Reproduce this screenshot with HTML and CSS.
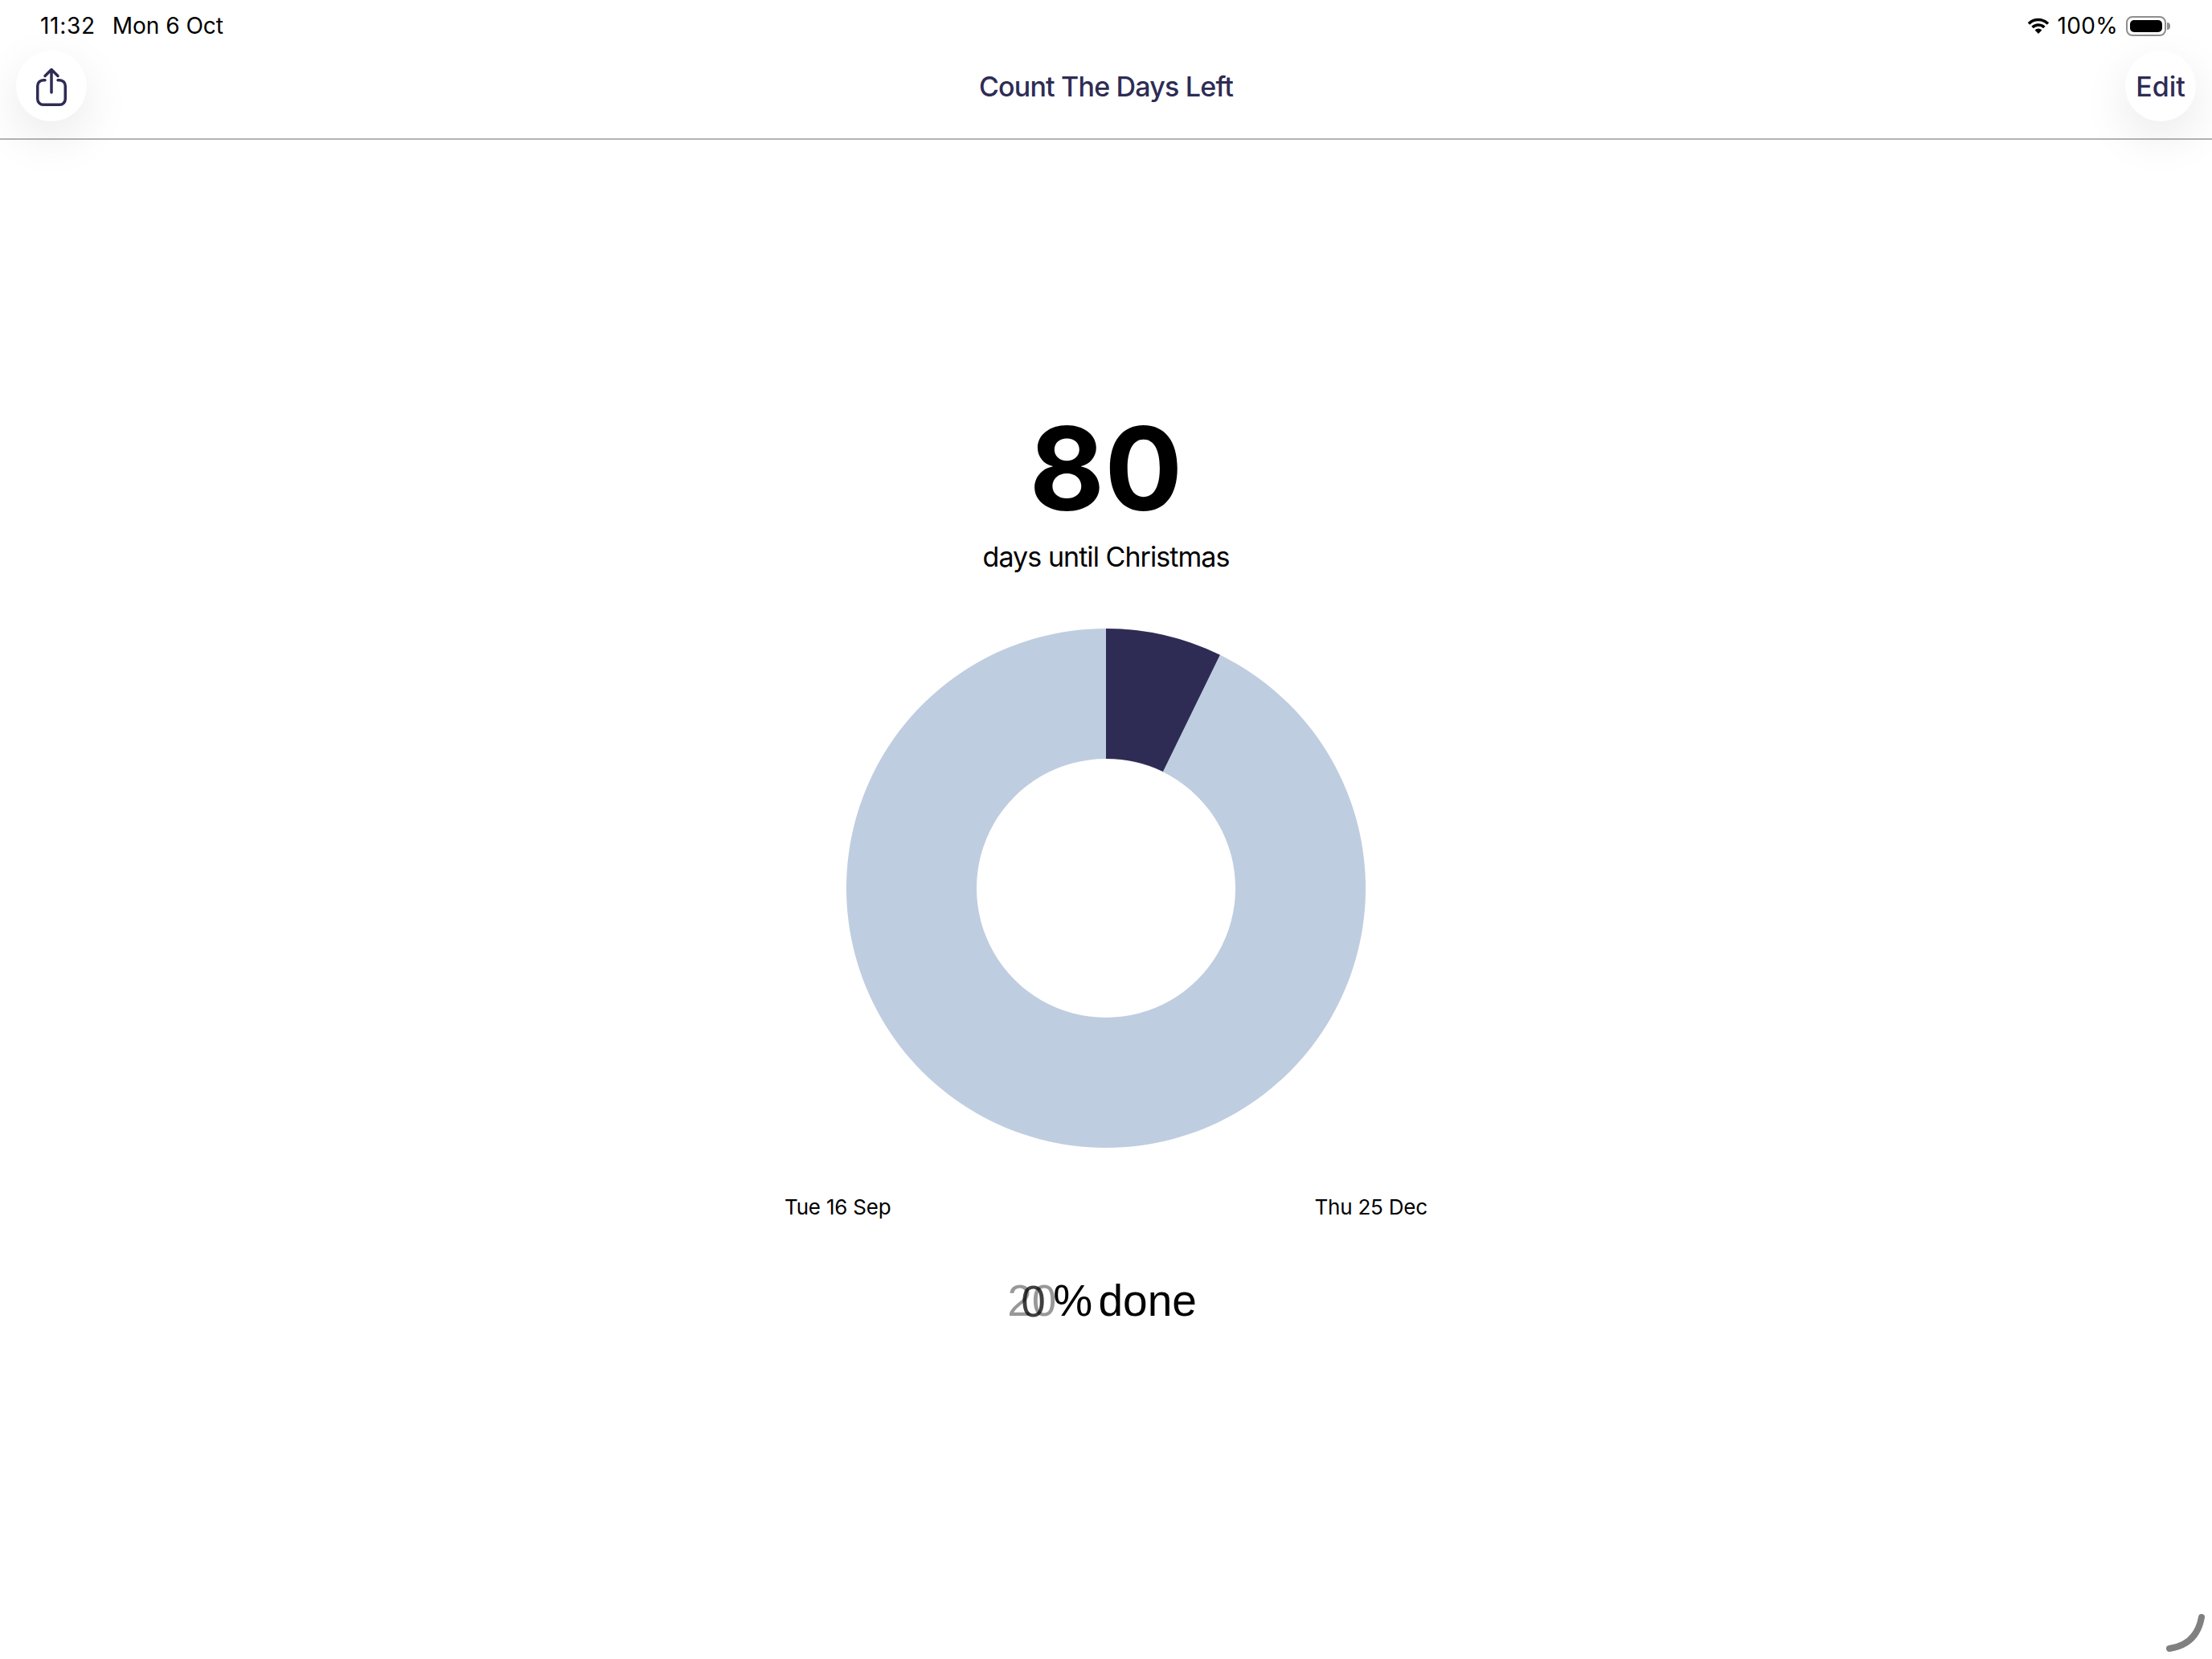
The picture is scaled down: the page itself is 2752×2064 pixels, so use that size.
FILE: index.html
```html
<!DOCTYPE html>
<html lang="en">
<head>
  <meta charset="UTF-8" />
  <meta name="viewport" content="width=device-width, initial-scale=1.0"/>
  <title>Count The Days Left</title>
  <link rel="stylesheet" href="styles.css">
</head>
<body>
  <div class="status-bar">
    <div class="status-time">
      <span class="clock">11:32</span>
      <span>Mon 6 Oct</span>
    </div>
    <div class="status-icons">
      <svg class="wifi" viewBox="0 0 30 20" width="30" height="20">
        <path d="M3 7.5A17 17 0 0 1 27 7.5" fill="none" stroke="#000" stroke-width="3.6"/>
        <path d="M7.6 12A10.5 10.5 0 0 1 22.4 12" fill="none" stroke="#000" stroke-width="3.6"/>
        <path d="M15 20L10.6 15.4A6.2 6.2 0 0 1 19.4 15.4Z" fill="#000"/>
      </svg>
      <span class="battery-level">100%</span>
      <div class="battery"><div class="battery-fill"></div></div>
      <div class="battery-nub"></div>
    </div>
  </div>

  <div class="nav-bar">
    <button class="round-btn">
      <svg class="share-icon" viewBox="0 0 44 50" width="44" height="50">
        <path d="M14 15.75H11.75a7 7 0 0 0-7 7V39.25a7 7 0 0 0 7 7H32.25a7 7 0 0 0 7-7V22.75a7 7 0 0 0-7-7H30" fill="none" stroke="#2e2c54" stroke-width="3.5" stroke-linecap="round"/>
        <path d="M22 3V31M14 10.5L22 2.5L30 10.5" fill="none" stroke="#2e2c54" stroke-width="3.5" stroke-linecap="round" stroke-linejoin="round"/>
      </svg>
    </button>
    <div class="nav-title">Count The Days Left</div>
    <button class="round-btn edit-btn">Edit</button>
  </div>

  <div class="content">
    <div class="days-count">80</div>
    <div class="days-label">days until Christmas</div>

    <svg class="donut" viewBox="0 0 646 646" width="646" height="646">
      <path d="M323 0A323 323 0 1 1 322.99 0ZM323 162A161 161 0 1 0 323.01 162Z" fill="#bfcde0" fill-rule="evenodd"/>
      <path d="M323 0A323 323 0 0 1 464.8 32.8L393.9 177.9A161 161 0 0 0 323 162Z" fill="#2e2c54"/>
    </svg>

    <div class="date-row">
      <span>Tue 16 Sep</span>
      <span>Thu 25 Dec</span>
    </div>

    <div class="percent-done"><span class="counter"><span class="counter-old">20</span><span class="counter-new">0</span></span>% done</div>
  </div>

  <svg class="home-indicator" viewBox="0 0 62 59" width="62" height="59">
    <path d="M9 46Q43 41 49 7" fill="none" stroke="#808080" stroke-width="8" stroke-linecap="round"/>
  </svg>
</body>
</html>
```

FILE: styles.css
```css
* {
  box-sizing: border-box;
  margin: 0;
  padding: 0;
}

body {
  font-family: Inter, 'Noto Sans', sans-serif;
  background: white;
  color: black;
  width: 2752px;
  height: 2064px;
  overflow: hidden;
  position: relative;
}

.status-bar {
  height: 56px;
  padding: 8px 52px 0 50px;
  display: flex;
  justify-content: space-between;
  align-items: center;
  font-size: 28px;
}

.status-time {
  display: flex;
  gap: 21px;
}

.clock {
  letter-spacing: 0.7px;
}

.status-icons {
  display: flex;
  align-items: center;
}

.wifi {
  margin-right: 9px;
}

.battery-level {
  letter-spacing: 0.3px;
}

.battery {
  width: 50px;
  height: 25px;
  margin-left: 10px;
  padding: 3px;
  border: 2px solid #8e8e8e;
  border-radius: 8px;
}

.battery-fill {
  height: 100%;
  background: black;
  border-radius: 5px;
}

.battery-nub {
  width: 4px;
  height: 9px;
  margin-left: 1px;
  background: #8e8e8e;
  border-radius: 0 4px 4px 0;
}

.nav-bar {
  height: 118px;
  padding: 0 20px 14px;
  display: grid;
  grid-template-columns: 88px 1fr 88px;
  align-items: center;
  border-bottom: 2px solid #b4b4b4;
}

.round-btn {
  width: 88px;
  height: 88px;
  border: none;
  border-radius: 50%;
  background: white;
  color: #2e2c54;
  font-family: inherit;
  font-size: 34px;
  font-weight: 500;
  box-shadow: 0 20px 60px rgba(0, 0, 0, 0.09);
  display: flex;
  justify-content: center;
  align-items: center;
}

.share-icon {
  margin-top: 4px;
}

.nav-title {
  text-align: center;
  color: #2e2c54;
  font-size: 34px;
  font-weight: 500;
  letter-spacing: -0.8px;
}

.content {
  padding-top: 337px;
  display: flex;
  flex-direction: column;
  align-items: center;
}

.days-count {
  font-size: 144px;
  line-height: 144px;
  font-weight: 700;
}

.days-label {
  margin-top: 16px;
  font-size: 34px;
  line-height: 44px;
  letter-spacing: -0.95px;
}

.donut {
  margin-top: 67px;
  display: block;
}

.date-row {
  width: 800px;
  margin-top: 58px;
  display: flex;
  justify-content: space-between;
  font-size: 26px;
  line-height: 32px;
  letter-spacing: -0.2px;
}

.percent-done {
  margin-top: 68px;
  padding-right: 10px;
  font-family: 'Liberation Sans', Arial, sans-serif;
  font-size: 55px;
  line-height: 64px;
  word-spacing: -8px;
}

.counter {
  position: relative;
  margin-right: -4px;
}

.counter-old {
  opacity: 0.4;
}

.counter-new {
  position: absolute;
  left: 17px;
  top: 0;
  opacity: 0.75;
}

.home-indicator {
  position: absolute;
  left: 2690px;
  top: 2005px;
}
```
